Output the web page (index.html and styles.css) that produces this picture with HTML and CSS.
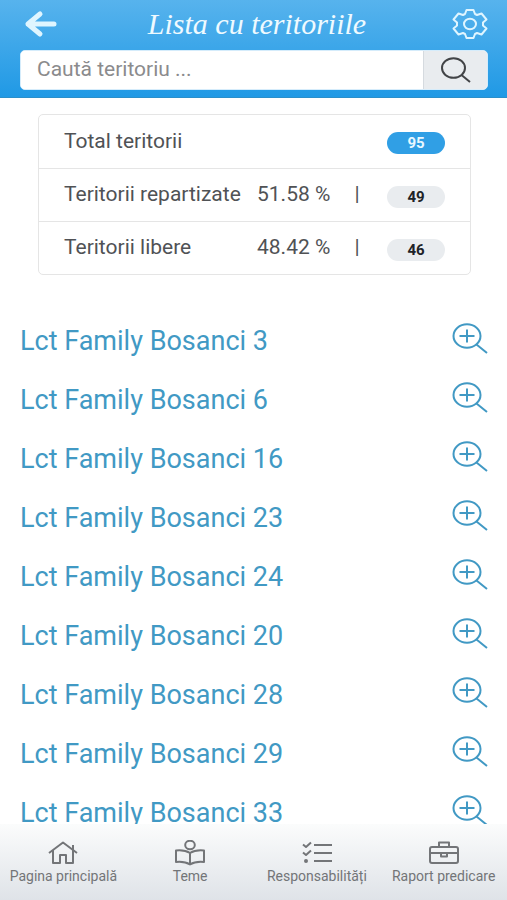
FILE: index.html
```html
<!DOCTYPE html>
<html lang="ro">
<head>
<meta charset="utf-8">
<meta name="viewport" content="width=device-width, initial-scale=1">
<title>Lista cu teritoriile</title>
<link rel="stylesheet" href="styles.css">
</head>
<body>
<svg class="defs" aria-hidden="true">
  <symbol id="zoom-in" viewBox="0 0 36 32">
    <ellipse cx="15" cy="13" rx="13.500" ry="11.700"/>
    <path d="M15 6.500v13M7.500 13h15M24.500 21.500l10.500 8.500"/>
  </symbol>
</svg>
<header class="header">
  <div class="bar">
    <a class="bar-link" href="#" aria-label="Înapoi">
      <svg class="back" viewBox="0 0 42 28"><path d="M20 4L8 14l12 10M8 14h26"/></svg>
    </a>
    <h1 class="title">Lista cu teritoriile</h1>
    <a class="bar-link" href="#" aria-label="Setări">
      <svg class="gear" viewBox="0 0 36 32"><path d="M14.500 2h7l1.500 4 2 1 4.500-1.500 5 6-3.500 3v3l3.500 3-5 6-4.500-1.500-2 1-1.500 4h-7l-1.500-4-2-1-4.500 1.500-5-6 3.500-3v-3l-3.500-3 5-6L11 7l2-1z"/><ellipse cx="18" cy="16" rx="6" ry="5.300"/></svg>
    </a>
  </div>
  <form class="search">
    <input class="search-input" type="text" aria-label="Caută teritoriu" placeholder="Caută teritoriu ...">
    <button class="search-button" type="button" aria-label="Caută">
      <svg viewBox="0 0 30 26"><ellipse cx="12.500" cy="11" rx="11.500" ry="9.800"/><path d="M20.500 18l8.500 7"/></svg>
    </button>
  </form>
</header>
<main>
  <table class="stats">
    <tr><th scope="row">Total teritorii</th><td class="percent"></td><td class="bar-cell"></td><td class="count"><span class="badge badge-total">95</span></td></tr>
    <tr><th scope="row">Teritorii repartizate</th><td class="percent">51.58 %</td><td class="bar-cell">|</td><td class="count"><span class="badge">49</span></td></tr>
    <tr><th scope="row">Teritorii libere</th><td class="percent">48.42 %</td><td class="bar-cell">|</td><td class="count"><span class="badge">46</span></td></tr>
  </table>
  <ul class="list">
    <li><a class="item" href="#">Lct Family Bosanci 3<svg><use href="#zoom-in"/></svg></a></li>
    <li><a class="item" href="#">Lct Family Bosanci 6<svg><use href="#zoom-in"/></svg></a></li>
    <li><a class="item" href="#">Lct Family Bosanci 16<svg><use href="#zoom-in"/></svg></a></li>
    <li><a class="item" href="#">Lct Family Bosanci 23<svg><use href="#zoom-in"/></svg></a></li>
    <li><a class="item" href="#">Lct Family Bosanci 24<svg><use href="#zoom-in"/></svg></a></li>
    <li><a class="item" href="#">Lct Family Bosanci 20<svg><use href="#zoom-in"/></svg></a></li>
    <li><a class="item" href="#">Lct Family Bosanci 28<svg><use href="#zoom-in"/></svg></a></li>
    <li><a class="item" href="#">Lct Family Bosanci 29<svg><use href="#zoom-in"/></svg></a></li>
    <li><a class="item" href="#">Lct Family Bosanci 33<svg><use href="#zoom-in"/></svg></a></li>
  </ul>
</main>
<nav class="tabs">
  <a href="#"><svg viewBox="0 0 30 26"><path d="M1 13L15 2.500 29 13M5 10.500V23h7v-8h6v8h7V10.500M25 9.500V5"/></svg>Pagina principală</a>
  <a href="#"><svg viewBox="0 0 30 26"><ellipse cx="15" cy="5" rx="4.800" ry="4.300"/><path d="M15 13C11 10.500 6 10 1 10.500V22c5-.5 10 0 14 2.500 4-2.500 9-3 14-2.500V10.500c-5-.5-10 0-14 2.500zv11.500"/></svg>Teme</a>
  <a href="#"><svg viewBox="0 0 30 26"><path d="M1 4.500l3 2.500 5-4.500M1 12.500l3 2.500 5-4.500M12 5h18M12 13h18M12 21h18"/><circle class="dot" cx="4" cy="21" r="1"/></svg>Responsabilități</a>
  <a href="#"><svg viewBox="0 0 30 26"><rect x="1" y="7" width="28" height="16" rx="2"/><path d="M10 7V2.500h10V7M1 13h28M12 13v3.500h6V13"/></svg>Raport predicare</a>
</nav>
</body>
</html>
```
FILE: styles.css
```css
* { box-sizing: border-box; }
body {
  margin: 0;
  background: #fff;
  color: #505255;
  font-family: Roboto, "Liberation Sans", sans-serif;
}
a { text-decoration: none; }
svg {
  fill: none;
  stroke: currentColor;
  stroke-width: 2;
  stroke-linejoin: round;
}
.defs { position: absolute; width: 0; height: 0; }
.header {
  padding: 0 19px 7px 20px;
  background: linear-gradient(#57b3ed, #2099e5);
  border-bottom: 1px solid #2b8fca;
}
.bar {
  display: flex;
  align-items: center;
  justify-content: space-between;
  height: 50px;
  padding-bottom: 2px;
}
.bar-link { display: flex; color: #dff5ff; }
.back { width: 42px; height: 28px; stroke-width: 5; stroke-linecap: round; }
.gear { width: 36px; height: 32px; }
.title {
  margin: 0;
  color: #effaff;
  font: italic 400 30px/44px "Liberation Serif", serif;
}
.search {
  display: flex;
  height: 40px;
  overflow: hidden;
  border: 1px solid #d5ecfb;
  border-radius: 5px;
  background: #fff;
}
.search-input {
  flex: 1;
  min-width: 0;
  padding: 0 16px 2px;
  border: 0;
  color: #555;
  background: #fff;
  font: 21px Roboto, "Liberation Sans", sans-serif;
}
.search-input::placeholder { color: #8b8b8d; opacity: 1; }
.search-button {
  display: flex;
  align-items: center;
  justify-content: center;
  width: 64px;
  padding: 0;
  border: 0;
  border-left: 1px solid #d5dadf;
  background: #e9ecef;
  color: #424447;
}
.search-button svg { width: 30px; height: 26px; }
.stats {
  width: calc(100% - 74px);
  margin: 16px 36px 0 38px;
  border: 1px solid #e5e5e5;
  border-radius: 5px;
  border-spacing: 0;
  font-size: 21px;
  line-height: 22px;
}
.stats th, .stats td {
  height: 53px;
  padding: 0 0 2px;
  font-weight: 400;
  text-align: left;
  white-space: nowrap;
}
.stats tr + tr > * { border-top: 1px solid #e5e5e5; }
.stats th { padding-left: 25px; }
.stats .percent { width: 88px; }
.stats .bar-cell { width: 24px; text-align: center; }
.stats .count { width: 101px; padding: 2px 25px 0 0; text-align: right; }
.badge {
  display: inline-block;
  width: 58px;
  border-radius: 11px;
  background: #e9ecef;
  color: #202327;
  font-size: 15px;
  font-weight: 700;
  line-height: 22px;
  text-align: center;
  vertical-align: middle;
}
.badge-total { background: #309fe5; color: #e9f8ff; }
.list {
  margin: 36px 0 0;
  padding: 0 19px 0 20px;
  list-style: none;
}
.item {
  display: flex;
  align-items: center;
  justify-content: space-between;
  height: 59px;
  color: #4199c4;
  font-size: 27px;
}
.item svg { width: 36px; height: 32px; margin-bottom: 4px; }
.tabs {
  position: fixed;
  right: 0;
  bottom: 0;
  left: 0;
  display: grid;
  grid-template-columns: repeat(4, 1fr);
  height: 76px;
  padding-top: 16px;
  background: linear-gradient(#fbfcfc, #dfe3e8);
}
.tabs a {
  display: flex;
  flex-direction: column;
  align-items: center;
  color: #737578;
  font-size: 14px;
  line-height: 20px;
  white-space: nowrap;
}
.tabs svg { width: 30px; height: 26px; }
.dot { fill: currentColor; }
```
